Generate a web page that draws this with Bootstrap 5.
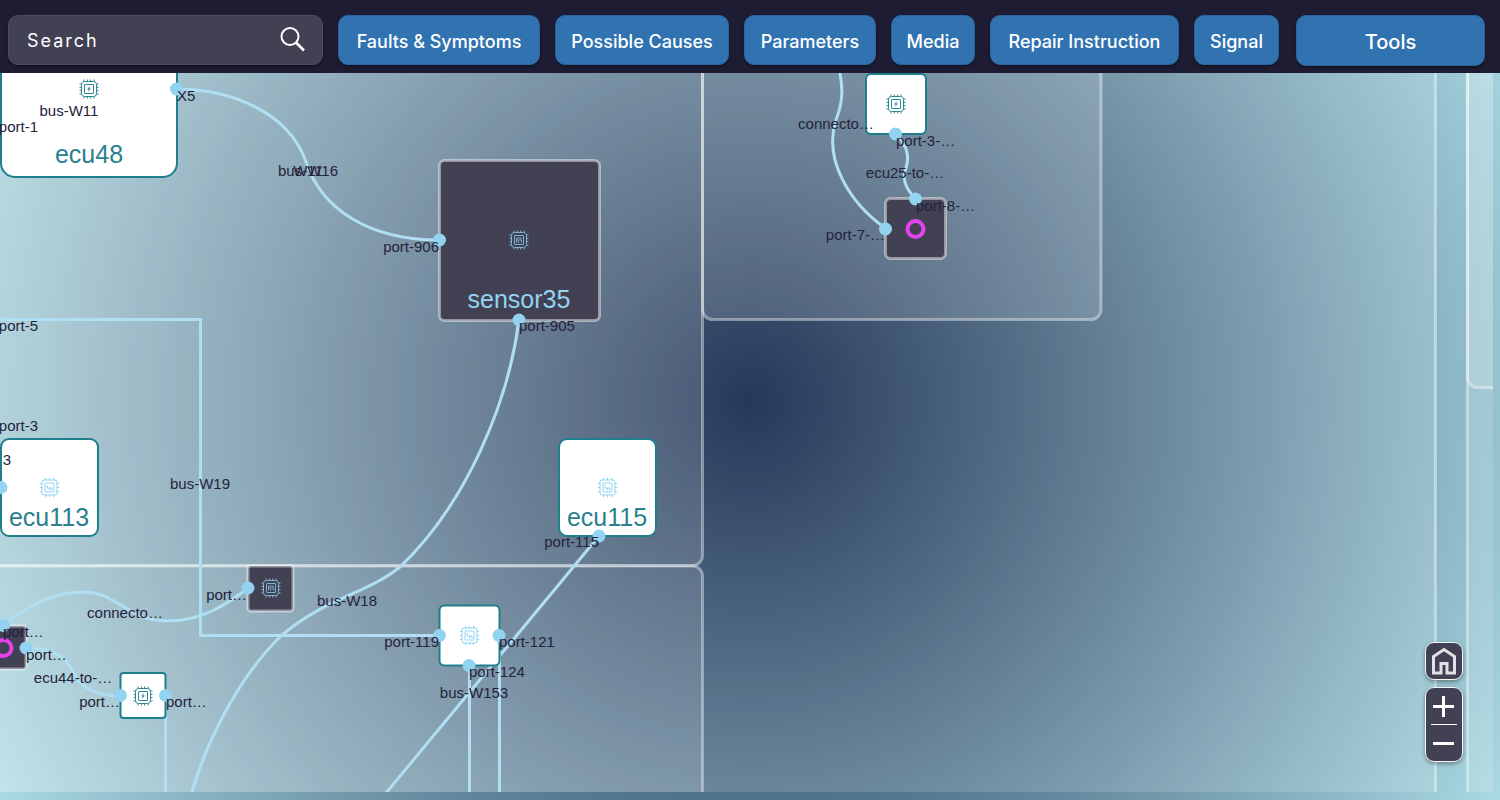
<!DOCTYPE html>
<html lang="en">
<head>
<meta charset="utf-8">
<meta name="viewport" content="width=device-width, initial-scale=1">
<title>Vehicle network diagram</title>
<link href="https://cdn.jsdelivr.net/npm/bootstrap@5.3.0/dist/css/bootstrap.min.css" rel="stylesheet">
<style>
  body {
    font-family: Inter, "Noto Sans", sans-serif;
    background: radial-gradient(circle farthest-corner at center, #00163c, #aadae3);
  }
  .topbar { background: #1e1c33; padding: 15px 15px 7px 8px; }
  .topbar-grid { display: grid; grid-template-columns: 315px 202px 174px 132px 84px 189px 85px minmax(120px, 1fr); column-gap: 15px; }
  .tool-btn, .search-box {
    height: 50px; border-radius: 10px; font-size: 18px; box-shadow: 0 2px 3px rgba(0, 0, 0, .35);
  }
  .tool-btn { --bs-btn-color: #fff; --bs-btn-bg: #3173b1; --bs-btn-border-color: #2a649e; --bs-btn-hover-color: #fff; --bs-btn-hover-bg: #3b80c0; --bs-btn-font-weight: 500; padding: 2px 0 0; white-space: nowrap; }
  .tool-btn-main { height: 51px; margin-left: 2px; font-size: 20px; }
  .search-box, .search-box:focus { background: #424153; border: 1px solid #4d4b60; color: #fff; padding: 0 60px 0 18px; letter-spacing: 2px; }
  .search-box::placeholder { color: #fff; opacity: 1; }
  .search-go { right: 16px; top: 10px; width: 28px; height: 28px; }
  .diagram { margin: 0 7px 8px 0; min-height: 0; }
  .diagram svg.plan { font-family: "Liberation Sans", Arial, sans-serif; }
  .zone { fill: #fff; fill-opacity: .15; stroke: #fff; stroke-opacity: .4; stroke-width: 3; }
  .wire { fill: none; stroke: #b0dff4; stroke-width: 3; }
  .unit { fill: #fff; stroke: #1f7f8c; stroke-width: 2; }
  .sensor { fill: #424153; stroke: #fff; stroke-opacity: .45; stroke-width: 3; }
  .ring { fill: none; stroke: #e243ec; stroke-width: 4; }
  .pin { fill: #92d3f2; }
  .tag { font-size: 15px; fill: #24233c; }
  .title { font-size: 25px; text-anchor: middle; fill: #2a808e; }
  .title-light { fill: #92d3f2; }
  .mid { text-anchor: middle; }
  .end { text-anchor: end; }
  .sky { color: #8fd2f1; }
  .teal { color: #2c8792; }
  .controls { right: 37px; bottom: 38px; width: 38px; gap: 7px; }
  .control-box { background: #424153; border: 1px solid #f4f4f6; border-radius: 9px; box-shadow: 0 2px 4px rgba(0, 0, 0, .35); }
  .control-box button { height: 36px; }
  .control-rule { height: 1px; margin: 0 5px; background: #fff; }
</style>
</head>
<body class="vh-100 d-flex flex-column overflow-hidden">

<header class="topbar">
  <div class="topbar-grid">
    <form class="position-relative" role="search" onsubmit="return false">
      <input type="search" class="form-control search-box" placeholder="Search" aria-label="Search">
      <button type="submit" class="search-go position-absolute btn p-0 border-0 d-flex" aria-label="Run search">
        <svg width="28" height="28" viewBox="0 0 28 28" fill="none" stroke="#fff" stroke-width="2"><circle cx="11" cy="11.500" r="8.500"/><path d="M17 17.500l8 8" stroke-width="2.600"/></svg>
      </button>
    </form>
    <button type="button" class="btn tool-btn">Faults &amp; Symptoms</button>
    <button type="button" class="btn tool-btn">Possible Causes</button>
    <button type="button" class="btn tool-btn">Parameters</button>
    <button type="button" class="btn tool-btn">Media</button>
    <button type="button" class="btn tool-btn">Repair Instruction</button>
    <button type="button" class="btn tool-btn">Signal</button>
    <button type="button" class="btn tool-btn tool-btn-main">Tools</button>
  </div>
</header>

<main class="diagram flex-grow-1 overflow-hidden">
<svg class="plan d-block w-100 h-100" role="img" aria-label="Network plan">
  <defs>
    <symbol id="chip" viewBox="0 0 20 20">
      <g fill="none" stroke="currentColor" stroke-width="1">
        <rect x="2.500" y="2.500" width="15" height="15" rx="3"/>
        <rect x="5.500" y="5.500" width="9" height="9" rx=".5"/>
        <path d="M5 .5v2M8.400 .5v2M11.600 .5v2M15 .5v2M5 17.500v2M8.400 17.500v2M11.600 17.500v2M15 17.500v2M.5 5h2M.5 8.400h2M.5 11.600h2M.5 15h2M17.500 5h2M17.500 8.400h2M17.500 11.600h2M17.500 15h2"/>
      </g>
    </symbol>
    <symbol id="chip-power" viewBox="0 0 20 20">
      <use href="#chip"/>
      <path d="M10.800 7l-2.600 3.400h1.500L9.200 13l2.600-3.400h-1.500z" fill="currentColor"/>
    </symbol>
    <symbol id="chip-sensor" viewBox="0 0 20 20">
      <use href="#chip"/>
      <path d="M7.500 12.500V8h4.500v1.500M7.500 10h5v2.500M9.500 11v2" fill="none" stroke="currentColor" stroke-width=".9"/>
    </symbol>
    <symbol id="chip-logic" viewBox="0 0 20 20">
      <g fill="none" stroke="currentColor" stroke-width="1">
        <rect x="2.500" y="2.500" width="15" height="15" rx="2"/>
        <rect x="5.500" y="5.500" width="9" height="9" rx=".5"/>
        <path d="M6 .3v2.200M10 .3v2.200M14 .3v2.200M6 17.500v2.200M10 17.500v2.200M14 17.500v2.200M.3 6h2.200M.3 10h2.200M.3 14h2.200M17.500 6h2.200M17.500 10h2.200M17.500 14h2.200M7.700 7.600v2.900h4.800v2.500M10.200 10v3"/>
      </g>
    </symbol>
  </defs>

  <g transform="translate(0 -73)">
    <rect class="zone" x="-60" y="-60" width="1495.500" height="920" rx="10"/>
    <rect class="zone" x="-40" y="-40" width="742.500" height="605.500" rx="10"/>
    <rect class="zone" x="-40" y="566" width="742.500" height="300" rx="10"/>
    <rect class="zone" x="702.500" y="-40" width="398.500" height="359.500" rx="10"/>
    <rect class="zone" x="1467.500" y="-60" width="300" height="920" rx="10"/>
    <rect class="zone" x="1467.500" y="-40" width="280" height="427.500" rx="10"/>

    <g class="wire">
      <path d="M176 89C235 89 290 115 306 162C322 210 370 240 439 240"/>
      <path d="M519 320C508 405 465 505 400 567C368 593 326 598 282 635C240 675 207 740 192 792"/>
      <path d="M-4 319.500H200.500V635.500H439"/>
      <path d="M599 536L386 793"/>
      <path d="M469.500 665V793M499.500 635V793M165.500 696V793"/>
      <path d="M3 625C35 600 62 592 82 592C120 592 125 621 168 621C200 621 225 606 248 588"/>
      <path d="M26 648C50 648 66 655 73 672C80 688 98 696 120 696"/>
      <path d="M839 68C844 92 842 104 836 120C823 160 850 203 885 228"/>
      <path d="M896 134C909 148 909 158 906 168C902 178 905 188 915 198"/>
    </g>

    <rect class="unit" x="1" y="20" width="176" height="157" rx="14"/>
    <rect class="unit" x="1" y="439" width="97" height="97" rx="8"/>
    <rect class="unit" x="559" y="439" width="97" height="97" rx="8"/>
    <rect class="unit" x="120.500" y="673" width="45" height="45" rx="3"/>
    <rect class="unit" x="439.500" y="605.500" width="60" height="60" rx="5"/>
    <rect class="unit" x="866" y="74" width="60" height="60" rx="5"/>
    <rect class="sensor" x="439.500" y="160.500" width="160" height="160" rx="5"/>
    <rect class="sensor" x="248" y="566" width="45" height="45" rx="3"/>
    <rect class="sensor" x="-19" y="626" width="45" height="43" rx="3"/>
    <rect class="sensor" x="885.500" y="198.500" width="60" height="60" rx="5"/>

    <circle class="ring" cx="915.500" cy="229" r="8"/>
    <circle class="ring" cx="3.500" cy="648" r="8"/>

    <g class="teal">
      <use href="#chip-power" x="79" y="79" width="20" height="20"/>
      <use href="#chip-power" x="133" y="686" width="20" height="20"/>
      <use href="#chip-power" x="886" y="94" width="20" height="20"/>
    </g>
    <g class="sky">
      <use href="#chip-logic" x="39.500" y="477.500" width="20" height="20"/>
      <use href="#chip-logic" x="597.500" y="477.500" width="20" height="20"/>
      <use href="#chip-logic" x="459.500" y="625.500" width="20" height="20"/>
      <use href="#chip-sensor" x="509" y="230" width="20" height="20" opacity=".8"/>
      <use href="#chip-sensor" x="261" y="578" width="20" height="20" opacity=".8"/>
    </g>

    <g class="pin">
      <circle cx="176.500" cy="89" r="6.500"/><circle cx="439.500" cy="240" r="6.500"/><circle cx="519" cy="320" r="6.500"/>
      <circle cx="1" cy="487.500" r="6.500"/><circle cx="599" cy="536" r="6.500"/><circle cx="439.500" cy="635.500" r="6.500"/>
      <circle cx="499" cy="635.500" r="6.500"/><circle cx="469" cy="665.500" r="6.500"/><circle cx="248" cy="588" r="6.500"/>
      <circle cx="3.500" cy="625.500" r="6.500"/><circle cx="26" cy="648" r="6.500"/><circle cx="120.500" cy="695.500" r="6.500"/>
      <circle cx="165.500" cy="695.500" r="6.500"/><circle cx="895.500" cy="134" r="6.500"/><circle cx="915.500" cy="199" r="6.500"/>
      <circle cx="885.500" cy="229" r="6.500"/>
    </g>

    <text class="title" x="89" y="163">ecu48</text>
    <text class="title" x="49" y="526">ecu113</text>
    <text class="title" x="607" y="526">ecu115</text>
    <text class="title title-light" x="519" y="308">sensor35</text>

    <g class="tag">
      <text x="177" y="101">X5</text>
      <text x="519" y="331">port-905</text>
      <text x="3" y="637">port…</text>
      <text x="26" y="660">port…</text>
      <text x="166" y="707">port…</text>
      <text x="499" y="647">port-121</text>
      <text x="469" y="677">port-124</text>
      <text x="896" y="146">port-3-…</text>
      <text x="916" y="211">port-8-…</text>
    </g>
    <g class="tag mid">
      <text x="69" y="116">bus-W11</text>
      <text x="308" y="176">bus-W16</text>
      <text x="308" y="176">W11</text>
      <text x="200" y="489">bus-W19</text>
      <text x="125" y="618">connecto…</text>
      <text x="73" y="683">ecu44-to-…</text>
      <text x="347" y="606">bus-W18</text>
      <text x="474" y="698">bus-W153</text>
      <text x="836" y="129">connecto…</text>
      <text x="905" y="178">ecu25-to-…</text>
    </g>
    <g class="tag end">
      <text x="38" y="132">port-1</text>
      <text x="38" y="331">port-5</text>
      <text x="38" y="431">port-3</text>
      <text x="11" y="465">3</text>
      <text x="439" y="252">port-906</text>
      <text x="247" y="600">port…</text>
      <text x="120" y="707">port…</text>
      <text x="439" y="647">port-119</text>
      <text x="599" y="547">port-115</text>
      <text x="885" y="240">port-7-…</text>
    </g>
  </g>
</svg>
</main>

<div class="controls position-fixed d-flex flex-column">
  <div class="control-box">
    <button type="button" class="btn p-0 border-0 w-100 d-flex align-items-center justify-content-center" aria-label="Home view">
      <svg width="28" height="30" viewBox="0 0 28 30" fill="none" stroke="#e2e2e6" stroke-width="3"><path d="M3.500 27V10.500L14 3.500l10.500 7V27h-7.500V17.500h-6V27z"/></svg>
    </button>
  </div>
  <div class="control-box">
    <button type="button" class="btn p-0 border-0 w-100 d-flex align-items-center justify-content-center" aria-label="Zoom in">
      <svg width="22" height="22" viewBox="0 0 22 22" stroke="#fff" stroke-width="3"><path d="M0 11.500h21M10.500 1v21"/></svg>
    </button>
    <div class="control-rule"></div>
    <button type="button" class="btn p-0 border-0 w-100 d-flex align-items-center justify-content-center" aria-label="Zoom out">
      <svg width="22" height="22" viewBox="0 0 22 22" stroke="#fff" stroke-width="3"><path d="M0 11.500h21"/></svg>
    </button>
  </div>
</div>

<script src="https://cdn.jsdelivr.net/npm/bootstrap@5.3.0/dist/js/bootstrap.bundle.min.js"></script>
</body>
</html>
